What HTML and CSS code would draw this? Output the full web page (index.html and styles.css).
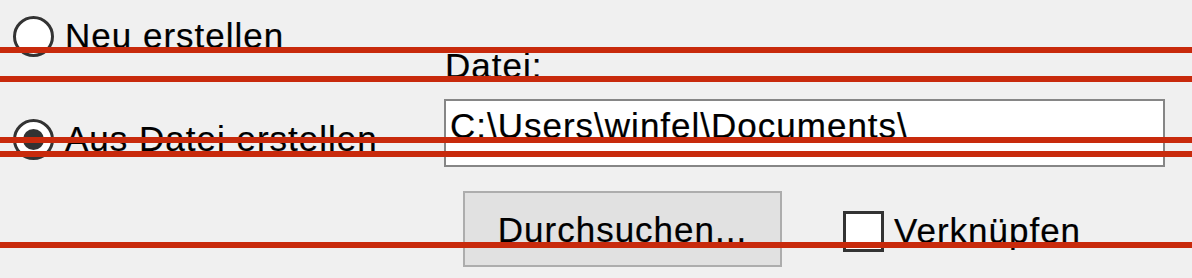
FILE: index.html
```html
<!DOCTYPE html>
<html lang="de">
<head>
    <meta charset="UTF-8">
    <meta name="viewport" content="width=device-width, initial-scale=1.0">
    <title>Objekt einfügen</title>
    <link rel="stylesheet" href="styles.css">
</head>
<body>
    <div class="dialog">
        <label class="option option-new">
            <input type="radio" name="source" value="new">
            <span>Neu erstellen</span>
        </label>
        <div class="file-label">Datei:</div>
        <div class="file-row">
            <div class="option-col">
                <label class="option">
                    <input type="radio" name="source" value="file" checked>
                    <span>Aus Datei erstellen</span>
                </label>
            </div>
            <input type="text" class="file-path" value="C:\Users\winfel\Documents\">
        </div>
        <div class="action-row">
            <button type="button" class="browse">Durchsuchen...</button>
            <label class="link">
                <input type="checkbox" name="link">
                <span>Verknüpfen</span>
            </label>
        </div>

        <!-- markierungslinien -->
        <div class="mark mark1"></div>
        <div class="mark mark2"></div>
        <div class="mark mark3"></div>
        <div class="mark mark4"></div>
        <div class="mark mark5"></div>
    </div>
</body>
</html>
```

FILE: styles.css
```css
body {
    margin: 0;
    background: #f0f0f0;
    font-family: "Liberation Sans", Arial, sans-serif;
    font-size: 35px;
    letter-spacing: 1px;
    color: #000;
    -webkit-text-stroke: 0.2px #000;
}
.dialog {
    position: relative;
    height: 278px;
    padding-top: 16px;
    box-sizing: border-box;
    overflow: hidden;
}
.option {
    display: flex;
    align-items: center;
    height: 40px;
    line-height: 40px;
    padding-left: 13px;
}
.option input[type="radio"] {
    appearance: none;
    -webkit-appearance: none;
    width: 41px;
    height: 41px;
    margin: 0 11px 0 0;
    border: 3px solid #333;
    border-radius: 50%;
    background: #fff;
    box-sizing: border-box;
    display: flex;
    align-items: center;
    justify-content: center;
    flex-shrink: 0;
}
.option input[type="radio"]:checked::after {
    content: "";
    width: 21px;
    height: 21px;
    border-radius: 50%;
    background: #333;
}
.file-label {
    margin: -2px 0 0 445px;
    height: 24px;
    line-height: 24px;
}
.file-row {
    display: flex;
    align-items: flex-start;
    margin-top: 21px;
}
.option-col {
    width: 444px;
    padding-top: 20px;
}
.file-path {
    width: 721px;
    height: 68px;
    box-sizing: border-box;
    border: 2px solid #868686;
    background: #fff;
    padding: 0 4px 15px 4px;
    margin: 0;
    font: inherit;
    letter-spacing: inherit;
    color: #000;
    outline: none;
}
.action-row {
    display: flex;
    align-items: center;
    margin: 24px 0 0 463px;
}
.browse {
    width: 319px;
    height: 76px;
    box-sizing: border-box;
    border: 2px solid #adadad;
    background: #e1e1e1;
    font: inherit;
    letter-spacing: inherit;
    color: #000;
    padding: 2px 0 0 0;
    margin: 0;
}
.link {
    display: flex;
    align-items: center;
    margin-left: 61px;
    line-height: 40px;
    padding-top: 4px;
}
.link input[type="checkbox"] {
    appearance: none;
    -webkit-appearance: none;
    width: 41px;
    height: 41px;
    margin: 0 10px 0 0;
    border: 3px solid #333;
    background: #fff;
    box-sizing: border-box;
}
.mark {
    position: absolute;
    left: 0;
    right: 0;
    height: 6px;
    background: #c82a0c;
}
.mark1 { top: 47px; }
.mark2 { top: 76px; }
.mark3 { top: 137px; }
.mark4 { top: 151px; }
.mark5 { top: 242px; }
```
